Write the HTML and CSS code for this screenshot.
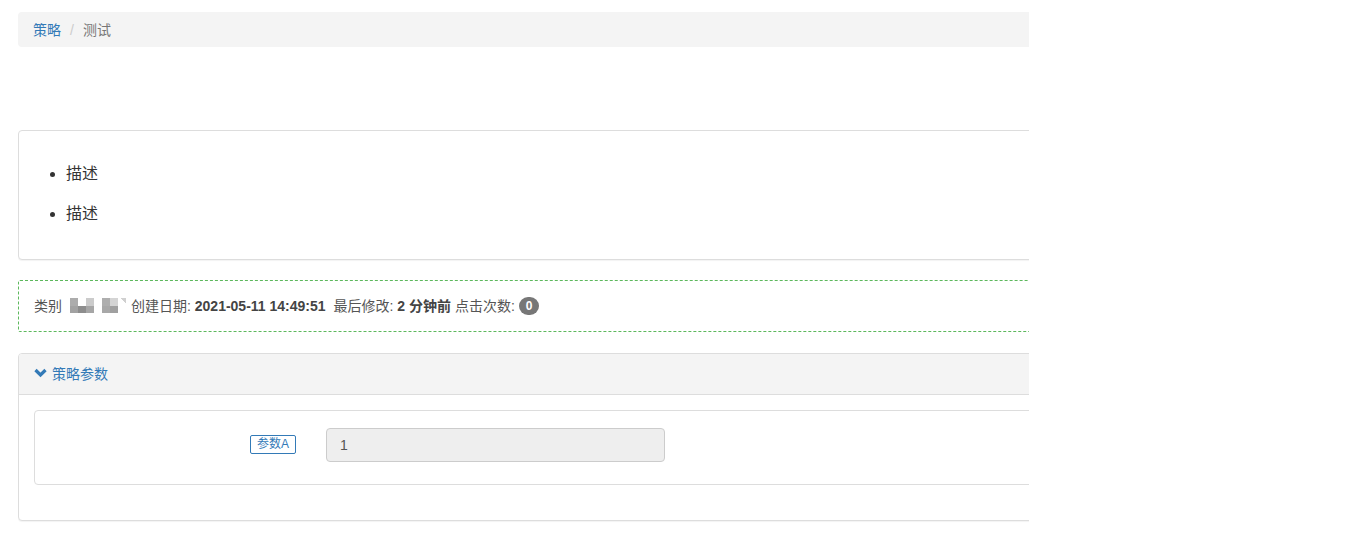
FILE: index.html
```html
<!DOCTYPE html>
<html lang="zh">
<head>
<meta charset="utf-8">
<title>策略 - 测试</title>
<link rel="stylesheet" href="styles.css">
</head>
<body>
<div class="page">
  <div class="inner">
    <ol class="breadcrumb">
      <li><a href="#">策略</a></li>
      <li class="sep">/</li>
      <li class="active">测试</li>
    </ol>

    <div class="panel desc">
      <div class="panel-body">
        <ul class="desc-list">
          <li>描述</li>
          <li>描述</li>
        </ul>
      </div>
    </div>

    <div class="meta">
      <span>类别</span>
      <span class="thumb">
        <i class="c1"></i><i class="c2"></i><i class="c3"></i>
        <i class="c4"></i><i class="c5"></i><i class="c6"></i>
      </span>
      <span class="thumb t2">
        <i class="c1"></i><i class="c2"></i><i class="c3"></i>
        <i class="c4"></i><i class="c5"></i><i class="c6"></i>
      </span>
      <span>创建日期: <b>2021-05-11 14:49:51</b></span>
      <span class="sp">最后修改: <b>2 分钟前</b> 点击次数: <span class="badge">0</span></span>
    </div>

    <div class="panel params">
      <div class="panel-heading">
        <svg class="chev" width="13" height="10" viewBox="0 0 13 10"><polyline points="1.5,2 6.5,7 11.5,2" fill="none" stroke="#337ab7" stroke-width="3.2" stroke-linecap="butt" stroke-linejoin="miter"/></svg>
        <span>策略参数</span>
      </div>
      <div class="panel-body">
        <div class="panel form-panel">
          <div class="form-row">
            <div class="label-col"><span class="plabel">参数A</span></div>
            <div class="input-col"><div class="input">1</div></div>
          </div>
        </div>
      </div>
    </div>
  </div>
</div>
</body>
</html>
```

FILE: styles.css
```css
* { box-sizing: border-box; }
html, body { margin: 0; padding: 0; background: #fff; }
body {
  font-family: "Liberation Sans", Arial, "Noto Sans CJK SC", sans-serif;
  font-size: 14px;
  line-height: 20px;
  color: #333;
}
.page {
  padding-top: 12px;
  margin-left: 18px;
  width: 1011px;
  overflow: hidden;
}
.inner { width: 1200px; }

.breadcrumb {
  list-style: none;
  margin: 0 0 83px;
  padding: 8px 15px 7px;
  background: #f4f4f4;
  border-radius: 4px;
  display: flex;
  align-items: center;
}
.breadcrumb li { line-height: 20px; }
.breadcrumb a { color: #337ab7; text-decoration: none; }
.breadcrumb .sep { color: #ccc; padding: 0 9px 0 9px; }
.breadcrumb .active { color: #777; }

.panel {
  border: 1px solid #ddd;
  border-radius: 4px;
  background: #fff;
  box-shadow: 0 1px 1px rgba(0,0,0,0.05);
}
.desc { margin-bottom: 20px; }
.desc .panel-body { padding: 15px; }
.desc-list {
  margin: 8px 0 10px;
  padding-left: 32px;
  font-size: 16px;
}
.desc-list li { padding: 10px 0; line-height: 20px; }

.meta {
  border: 1px dashed #5cb85c;
  border-radius: 2px;
  padding: 15px 15px;
  height: 52px;
  display: flex;
  align-items: center;
  color: #555;
  font-size: 14px;
  margin-bottom: 21px;
  white-space: nowrap;
}
.meta b { color: #444; font-weight: bold; }
.meta .sp { margin-left: 8px; }
.thumb {
  display: inline-grid;
  grid-template-columns: repeat(3, 8px);
  grid-template-rows: 8px 7px;
  margin-left: 8px;
  position: relative;
  top: -1px;
}
.thumb + .thumb { margin-left: 8px; margin-right: 5px; }
.thumb i { display: block; }
.thumb .c1 { background: #acacac; }
.thumb .c2 { background: #ffffff; }
.thumb .c3 { background: #cbcbcb; }
.thumb .c4 { background: #a2a2a2; }
.thumb .c5 { background: #8d8d8d; }
.thumb .c6 { background: #a6a6a6; }
.thumb.t2 .c1 { background: #aeaeae; }
.thumb.t2 .c2 { background: #d4d4d4; }
.thumb.t2 .c3 { background: linear-gradient(225deg, #d0d0d0 0 35%, #fff 35%); }
.thumb.t2 .c4 { background: #a8a8a8; }
.thumb.t2 .c5 { background: #a0a0a0; }
.thumb.t2 .c6 { background: #fff; }
.badge {
  display: inline-block;
  background: #777;
  color: #fff;
  font-size: 12px;
  font-weight: bold;
  line-height: 12px;
  padding: 3px 7px;
  border-radius: 10px;
  vertical-align: middle;
  position: relative;
  top: -1px;
}

.params { margin-bottom: 20px; }
.panel-heading {
  background: #f4f4f4;
  border-bottom: 1px solid #ddd;
  padding: 10px 15px;
  height: 41px;
  display: flex;
  align-items: center;
  color: #337ab7;
  border-radius: 3px 3px 0 0;
}
.chev { margin-right: 5px; position: relative; top: -1px; }
.params > .panel-body { padding: 15px; }
.form-panel { margin-bottom: 20px; box-shadow: none; }
.form-row {
  display: flex;
  align-items: center;
  padding: 17px 0 22px;
}
.label-col {
  width: 276px;
  padding-right: 15px;
  text-align: right;
  position: relative;
  top: -2px;
}
.plabel {
  display: inline-block;
  border: 1px solid #337ab7;
  color: #337ab7;
  font-size: 12px;
  line-height: 17px;
  padding: 0 6px;
  border-radius: 2px;
}
.input-col { padding-left: 15px; }
.input {
  width: 339px;
  height: 34px;
  background: #eee;
  border: 1px solid #ccc;
  border-radius: 4px;
  padding: 6px 13px;
  color: #555;
  line-height: 20px;
}
```
